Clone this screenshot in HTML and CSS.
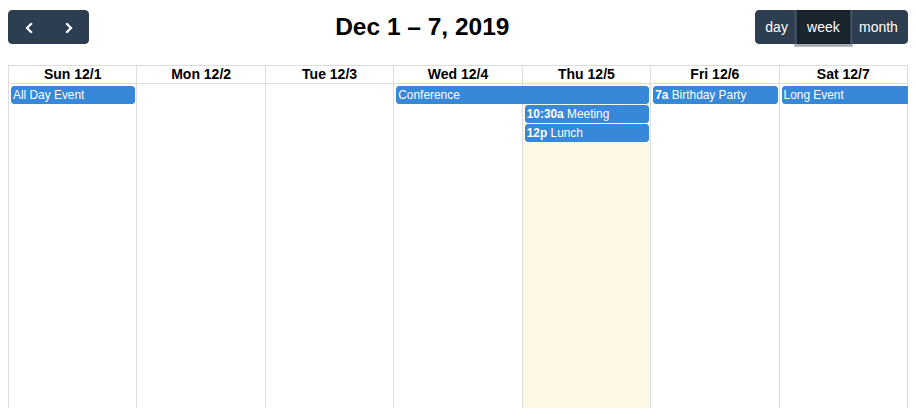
FILE: index.html
```html
<!DOCTYPE html>
<html lang="en">
  <head>
    <meta charset="UTF-8" />
    <meta name="viewport" content="width=device-width, initial-scale=1.0" />
    <title>Week Calendar</title>
    <link rel="stylesheet" href="styles.css">
  </head>
  <body>
    <div class="calendar">
      <div class="toolbar">
        <div class="btn-group">
          <button class="btn" aria-label="prev">
            <span class="icon">
              <svg width="8" height="10" viewBox="0 0 8 10"><path d="M6 1 L2 5 L6 9" /></svg>
            </span>
          </button>
          <button class="btn" aria-label="next">
            <span class="icon">
              <svg width="8" height="10" viewBox="0 0 8 10"><path d="M2 1 L6 5 L2 9" /></svg>
            </span>
          </button>
        </div>
        <h2 class="title">Dec 1 – 7, 2019</h2>
        <div class="btn-group">
          <button class="btn">day</button>
          <button class="btn active">week</button>
          <button class="btn">month</button>
        </div>
      </div>

      <div class="week">
        <div class="head">
          <div class="head-cell">Sun 12/1</div>
          <div class="head-cell">Mon 12/2</div>
          <div class="head-cell">Tue 12/3</div>
          <div class="head-cell">Wed 12/4</div>
          <div class="head-cell">Thu 12/5</div>
          <div class="head-cell">Fri 12/6</div>
          <div class="head-cell">Sat 12/7</div>
        </div>
        <div class="days">
          <div class="day col-1"></div>
          <div class="day col-2"></div>
          <div class="day col-3"></div>
          <div class="day col-4"></div>
          <div class="day col-5 today"></div>
          <div class="day col-6"></div>
          <div class="day col-7"></div>

          <!-- events -->
          <div class="event row-1 col-1"><span class="ev-title">All Day Event</span></div>
          <div class="event row-1 col-4 span-2"><span class="ev-title">Conference</span></div>
          <div class="event row-2 col-5"><span class="ev-time">10:30a</span> <span class="ev-title">Meeting</span></div>
          <div class="event row-3 col-5"><span class="ev-time">12p</span> <span class="ev-title">Lunch</span></div>
          <div class="event row-1 col-6"><span class="ev-time">7a</span> <span class="ev-title">Birthday Party</span></div>
          <div class="event row-1 col-7 not-end"><span class="ev-title">Long Event</span></div>
        </div>
      </div>
    </div>
  </body>
</html>
```

FILE: styles.css
```css
body {
  margin: 10px 8px 0;
  font-family: "Liberation Sans", Arial, sans-serif;
  font-size: 14px;
  color: #000;
  background: #fff;
}
.toolbar {
  display: flex;
  justify-content: space-between;
  align-items: center;
  margin-bottom: 21px;
}
.title {
  margin: 0;
  font-size: 24.5px;
  font-weight: bold;
}
.btn-group {
  display: inline-flex;
}
.btn {
  font-family: inherit;
  font-size: 14px;
  line-height: 1.5;
  padding: 0.4em 0.65em;
  color: #fff;
  background-color: #2c3e50;
  border: 1px solid #2c3e50;
  border-radius: 0;
  cursor: pointer;
}
.btn + .btn {
  margin-left: -1px;
}
.btn:first-child {
  border-radius: 4px 0 0 4px;
}
.btn:last-child {
  border-radius: 0 4px 4px 0;
}
.btn.active {
  position: relative;
  background-color: #1a252f;
  border-color: #151e27;
  box-shadow: 0 0 0 2.8px rgba(76, 91, 106, 0.5);
}
.icon {
  display: inline-flex;
  width: 21px;
  height: 21px;
  align-items: center;
  justify-content: center;
  vertical-align: top;
  padding-top: 2px;
  box-sizing: border-box;
}
.icon path {
  fill: none;
  stroke: #fff;
  stroke-width: 2.2;
  stroke-linecap: square;
}
.week {
  border-left: 1px solid #ddd;
}
.head,
.days {
  display: grid;
  grid-template-columns: repeat(7, 1fr);
}
.head {
  border-top: 1px solid #ddd;
}
.head-cell {
  text-align: center;
  font-weight: bold;
  line-height: 17px;
  border-right: 1px solid #ddd;
  border-bottom: 1px solid #ddd;
}
.days {
  grid-template-rows: auto auto auto 1fr;
  height: 600px;
}
.day {
  grid-row: 1 / -1;
  border-right: 1px solid #ddd;
  border-bottom: 1px solid #ddd;
}
.today {
  background-color: #fcf8e3;
}
.col-1 { grid-column-start: 1; }
.col-2 { grid-column-start: 2; }
.col-3 { grid-column-start: 3; }
.col-4 { grid-column-start: 4; }
.col-5 { grid-column-start: 5; }
.col-6 { grid-column-start: 6; }
.col-7 { grid-column-start: 7; }
.span-2 { grid-column-end: span 2; }
.row-1 { grid-row: 1; }
.row-2 { grid-row: 2; }
.row-3 { grid-row: 3; }
.event {
  margin: 1px 2px 0;
  padding: 0 1px;
  font-size: 11.9px;
  line-height: 16px;
  color: #fff;
  background-color: #3788d8;
  border: 1px solid #3788d8;
  border-radius: 3px;
  white-space: nowrap;
  overflow: hidden;
  align-self: start;
}
.event.row-1 {
  margin-top: 2px;
}
.event.not-end {
  margin-right: 0;
  border-top-right-radius: 0;
  border-bottom-right-radius: 0;
}
.ev-time {
  font-weight: bold;
}
```
